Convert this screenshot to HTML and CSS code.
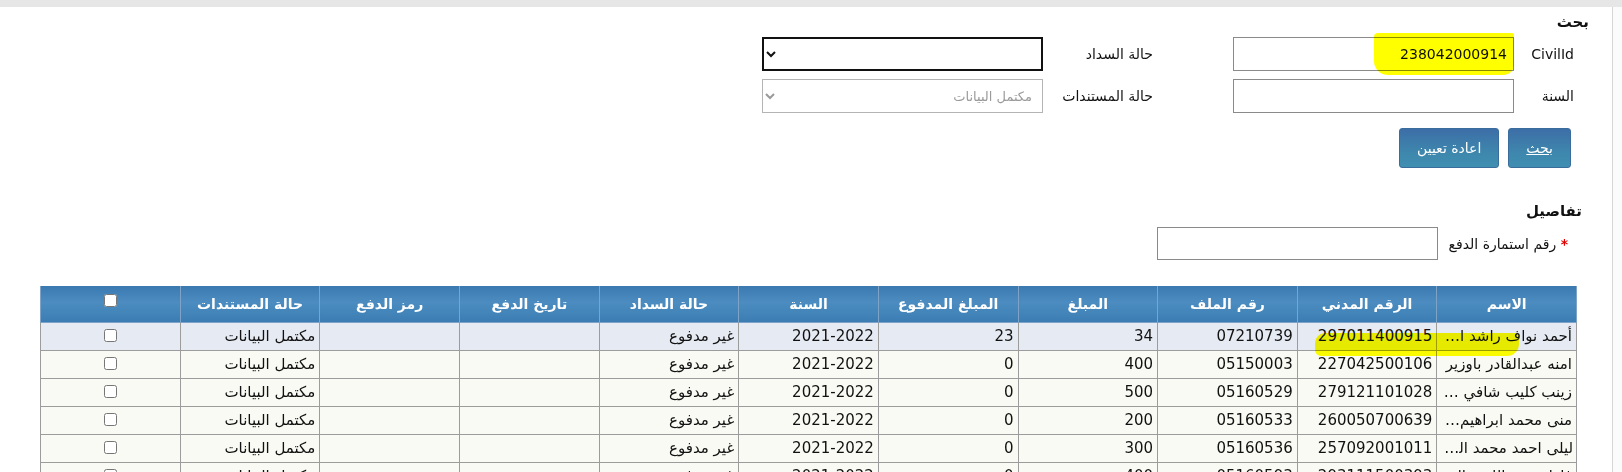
FILE: index.html
```html
<!DOCTYPE html>
<html lang="ar" dir="rtl">

<head>
  <meta charset="UTF-8">
  <meta name="viewport" content="width=device-width">
  <title>بحث</title>
  <link rel="stylesheet" href="styles.css">
</head>

<body>
  <div class="frame">

    <form class="search">
      <h2>بحث</h2>

      <div class="search-grid">
        <label>CivilId</label>
        <div class="marked">
          <input type="text" value="238042000914">
          <span class="marker"></span>
        </div>
        <span></span>
        <label>حالة السداد</label>
        <select class="pay-status"><option></option></select>

        <label>السنة</label>
        <input type="text">
        <span></span>
        <label>حالة المستندات</label>
        <select disabled><option>مكتمل البيانات</option></select>
      </div>

      <p class="actions">
        <button type="button"><u>بحث</u></button>
        <button type="button">اعادة تعيين</button>
      </p>
    </form>

    <h2 class="details-title">تفاصيل</h2>

    <div class="details-grid">
      <label><span class="required">*</span> رقم استمارة الدفع</label>
      <input type="text" class="short">
    </div>

    <table class="results">
      <thead>
        <tr>
          <th>الاسم</th>
          <th>الرقم المدني</th>
          <th>رقم الملف</th>
          <th>المبلغ</th>
          <th>المبلغ المدفوع</th>
          <th>السنة</th>
          <th>حالة السداد</th>
          <th>تاريخ الدفع</th>
          <th>رمز الدفع</th>
          <th>حالة المستندات</th>
          <th class="check"><input type="checkbox"></th>
        </tr>
      </thead>
      <tbody>
        <tr class="selected">
          <td>أحمد نواف راشد المطيري</td>
          <td class="marked-cell">297011400915<span class="marker row-marker"></span></td>
          <td>07210739</td>
          <td>34</td>
          <td>23</td>
          <td>2021-2022</td>
          <td>غير مدفوع</td>
          <td></td>
          <td></td>
          <td>مكتمل البيانات</td>
          <td class="check"><input type="checkbox"></td>
        </tr>
        <tr>
          <td>امنه عبدالقادر باوزير</td>
          <td>227042500106</td>
          <td>05150003</td>
          <td>400</td>
          <td>0</td>
          <td>2021-2022</td>
          <td>غير مدفوع</td>
          <td></td>
          <td></td>
          <td>مكتمل البيانات</td>
          <td class="check"><input type="checkbox"></td>
        </tr>
        <tr>
          <td>زينب كليب شافي فهد العنزي</td>
          <td>279121101028</td>
          <td>05160529</td>
          <td>500</td>
          <td>0</td>
          <td>2021-2022</td>
          <td>غير مدفوع</td>
          <td></td>
          <td></td>
          <td>مكتمل البيانات</td>
          <td class="check"><input type="checkbox"></td>
        </tr>
        <tr>
          <td>منى محمد ابراهيم العلي</td>
          <td>260050700639</td>
          <td>05160533</td>
          <td>200</td>
          <td>0</td>
          <td>2021-2022</td>
          <td>غير مدفوع</td>
          <td></td>
          <td></td>
          <td>مكتمل البيانات</td>
          <td class="check"><input type="checkbox"></td>
        </tr>
        <tr>
          <td>ليلى احمد محمد النجار</td>
          <td>257092001011</td>
          <td>05160536</td>
          <td>300</td>
          <td>0</td>
          <td>2021-2022</td>
          <td>غير مدفوع</td>
          <td></td>
          <td></td>
          <td>مكتمل البيانات</td>
          <td class="check"><input type="checkbox"></td>
        </tr>
        <tr>
          <td>فاطمة عبدالله سالم الهاجري</td>
          <td>293111500393</td>
          <td>05160593</td>
          <td>400</td>
          <td>0</td>
          <td>2021-2022</td>
          <td>غير مدفوع</td>
          <td></td>
          <td></td>
          <td>مكتمل البيانات</td>
          <td class="check"><input type="checkbox"></td>
        </tr>
      </tbody>
    </table>

  </div>
</body>

</html>
```

FILE: styles.css
```css
* {
  box-sizing: border-box;
}

html,
body {
  height: 100%;
  overflow: hidden;
}

body {
  margin: 0;
  border-top: 7px solid #e6e6e6;
  background-color: #fbfbfb;
  font-family: "DejaVu Sans", sans-serif;
  font-size: 14px;
  color: #111;
}

.frame {
  height: 100%;
  margin-right: 9px;
  padding: 5px 35px 0 40px;
  background-color: #ffffff;
  border-right: 1px solid #d6d6d6;
}

h2 {
  margin: 0 -12px 0 0;
  font-size: 15px;
  line-height: 20px;
  font-weight: bold;
  color: #111;
}

.search h2 {
  margin-bottom: 5px;
}

label {
  padding-right: 3px;
  font-size: 14px;
  white-space: nowrap;
}

.search-grid {
  display: grid;
  grid-template-columns: 63px 281px 77px 113px 281px;
  grid-auto-rows: 34px;
  row-gap: 8px;
  align-items: center;
}

input[type="text"] {
  width: 100%;
  height: 34px;
  padding: 0 6px;
  border: 1px solid #8a8a8a;
  border-radius: 0;
  background-color: #ffffff;
  font-family: "DejaVu Sans", sans-serif;
  font-size: 14px;
  color: #111;
}

select {
  width: 100%;
  height: 34px;
  padding: 0 6px;
  border-radius: 0;
  background-color: #ffffff;
  font-family: "DejaVu Sans", sans-serif;
  font-size: 13px;
}

select.pay-status {
  border: 2px solid #111;
  color: #111;
}

select:disabled {
  border: 1px solid #b4b4b4;
  color: #9a9a9a;
  opacity: 1;
}

.marked {
  position: relative;
  height: 34px;
}

.marker {
  position: absolute;
  background-color: #ffff00;
  mix-blend-mode: multiply;
  pointer-events: none;
}

.marked .marker {
  top: -4px;
  bottom: -4px;
  right: 0;
  width: 140px;
  border-radius: 4px 2px 10px 14px;
}

.actions {
  display: flex;
  gap: 9px;
  margin: 15px 0 0;
  padding-right: 6px;
}

.actions button {
  height: 40px;
  padding: 0 17px;
  border: 1px solid #3a6c9c;
  border-radius: 3px;
  background: linear-gradient(to bottom, #3d6ea7, #3e86ad 60%, #3f8fb1);
  color: #ffffff;
  font-family: "DejaVu Sans", sans-serif;
  font-size: 14px;
  cursor: pointer;
}

.details-title {
  margin-top: 33px;
  margin-bottom: 6px;
  margin-right: -5px;
}

.details-grid {
  display: grid;
  grid-template-columns: 139px 281px;
  align-items: center;
}

.details-grid label {
  padding-right: 9px;
}

.details-grid input.short {
  height: 33px;
}

.required {
  color: #e00000;
  font-weight: bold;
}

.results {
  width: 1537px;
  margin-top: 26px;
  border-collapse: collapse;
  table-layout: fixed;
}

.results th {
  height: 36px;
  padding: 0 4px;
  border: 1px solid #7fa3c6;
  border-top: none;
  background: linear-gradient(to bottom, #3a79b0, #4c8cc0 45%, #3b7db3);
  color: #ffffff;
  font-size: 14px;
  font-weight: bold;
  text-align: center;
}

.results td {
  height: 28px;
  padding: 0 4px;
  border: 1px solid #9c9c9c;
  background-color: #fafaf4;
  font-size: 15px;
  text-align: right;
  white-space: nowrap;
  overflow: hidden;
  text-overflow: ellipsis;
}

.results tr.selected td {
  background-color: #e6eaf3;
}

.results .check {
  text-align: center;
}

.results td.check input {
  margin: 0;
  vertical-align: -1px;
}

.results th.check input {
  margin: 0;
  vertical-align: 4px;
}

.results td.marked-cell {
  position: relative;
  overflow: visible;
}

.row-marker {
  top: 10px;
  left: 17px;
  right: -83px;
  height: 23px;
  border-radius: 10px 4px 12px 6px;
}
```
